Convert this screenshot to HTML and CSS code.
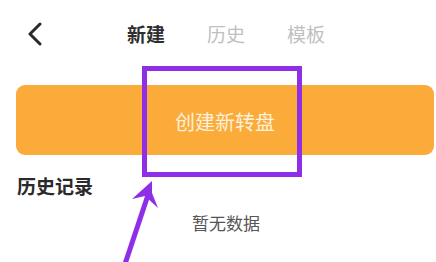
FILE: index.html
```html
<!DOCTYPE html>
<html lang="zh">
<head>
<meta charset="utf-8">
<link rel="stylesheet" href="styles.css">
</head>
<body>
<div class="page">
  <header class="nav">
    <svg class="back" width="16" height="24" viewBox="0 0 16 24"><path d="M13 2 L3 12 L13 22" fill="none" stroke="#2a2a2a" stroke-width="3" stroke-linecap="round" stroke-linejoin="round"/></svg>
    <div class="tabs">
      <span class="tab active">新建</span>
      <span class="tab">历史</span>
      <span class="tab">模板</span>
    </div>
  </header>
  <div class="btn-wrap">
    <div class="create-btn">创建新转盘</div>
  </div>
  <h2 class="section-title">历史记录</h2>
  <p class="empty">暂无数据</p>
  <div class="mark-box"></div>
  <svg class="mark-arrow" width="436" height="262" viewBox="0 0 436 262">
    <line x1="125" y1="264" x2="149" y2="192" stroke="#8e2ee6" stroke-width="5"/>
    <polygon points="152,181 132,199 145,196 158,208 152,193" fill="#8e2ee6"/>
  </svg>
</div>
</body>
</html>
```
FILE: styles.css
```css
html, body {
  margin: 0;
  padding: 0;
  background: #fff;
}
.page {
  position: relative;
  width: 436px;
  height: 262px;
  overflow: hidden;
  font-family: "Noto Sans CJK SC", "Noto Sans", sans-serif;
}
.nav {
  display: flex;
  align-items: center;
  height: 68px;
  padding-left: 27px;
}
.back {
  display: block;
}
.tabs {
  display: flex;
  gap: 42px;
  margin-left: 84px;
  margin-top: -1px;
}
.tab {
  font-size: 19px;
  line-height: 24px;
  color: #bfbfbf;
}
.tab.active {
  color: #2e2e2e;
  font-weight: 700;
}
.btn-wrap {
  padding: 17px 2px 0 16px;
}
.create-btn {
  height: 70px;
  border-radius: 9px;
  background: #fbab3a;
  color: #fdf1dc;
  font-size: 20px;
  display: flex;
  align-items: center;
  justify-content: center;
  padding-top: 2px;
  box-sizing: border-box;
}
.section-title {
  margin: 19px 0 0 17px;
  font-size: 19px;
  line-height: 24px;
  font-weight: 700;
  color: #2a2a2a;
}
.empty {
  margin: 13px 0 0;
  text-align: center;
  padding-left: 16px;
  font-size: 17px;
  line-height: 24px;
  color: #555;
}
.mark-box {
  position: absolute;
  left: 142px;
  top: 66px;
  width: 160px;
  height: 111px;
  box-sizing: border-box;
  border: 5px solid #8e2ee6;
}
.mark-arrow {
  position: absolute;
  left: 0;
  top: 0;
}
```
